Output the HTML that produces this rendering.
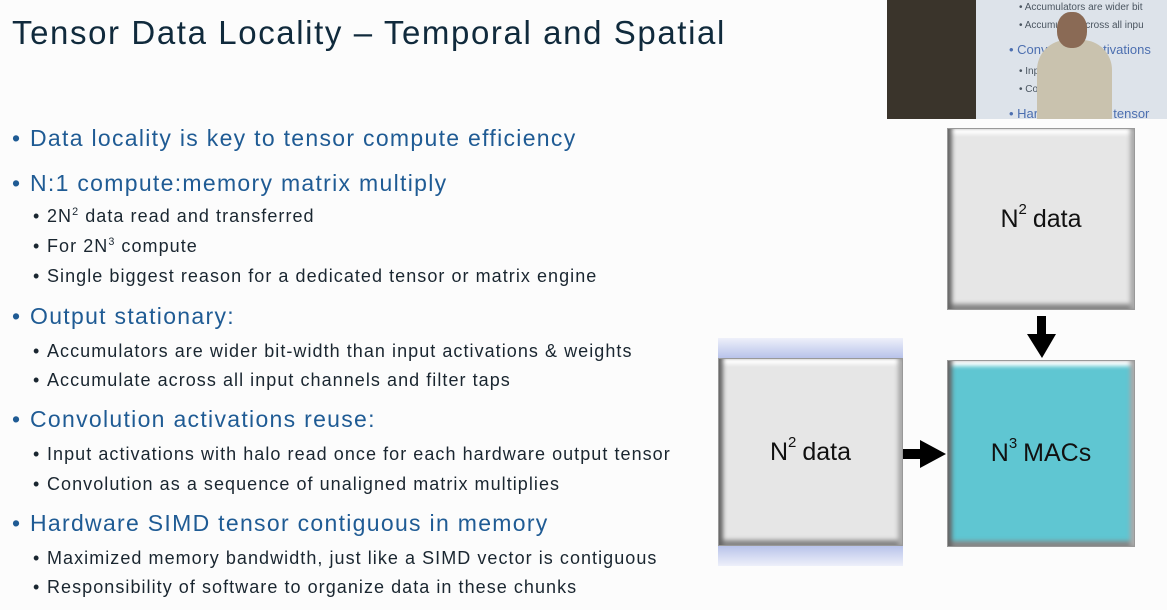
<!DOCTYPE html>
<html><head><style>
body{margin:0;width:1167px;height:610px;background:#fcfcfc;position:relative;overflow:hidden;font-family:"Liberation Sans",sans-serif}
.a{position:absolute;white-space:nowrap}
.t{left:12px;top:14px;font-size:33px;letter-spacing:1.6px;color:#102a3c}
.l1{left:12px;font-size:23px;letter-spacing:1.3px;color:#1f5b94}
.l2{left:33px;font-size:18px;letter-spacing:1.05px;color:#1a2630}
.l1 b,.l2 b{font-weight:normal;display:inline-block;width:18px}
.l2 b{width:14px}
sup{font-size:60%;vertical-align:0;position:relative;top:-7px}
.box{position:absolute;box-sizing:border-box;border:1px solid #999;
box-shadow:inset 6px 0 4px -2px #666, inset -6px 0 4px -2px #aaa, inset 0 8px 4px -3px #fff, inset 0 -8px 4px -3px #888;
display:flex;align-items:center;justify-content:center;font-size:25px;color:#111}
.g{background:#e6e6e6}
.c{background:#5fc6d2}
.box sup{font-size:60%;top:-10px;margin-right:6px}
</style></head><body>
<div class="a t">Tensor Data Locality – Temporal and Spatial</div>
<div class="a l1" style="top:125px"><b>•</b>Data locality is key to tensor compute efficiency</div>
<div class="a l1" style="top:170px"><b>•</b>N:1 compute:memory matrix multiply</div>
<div class="a l2" style="top:206px"><b>•</b>2N<sup>2</sup> data read and transferred</div>
<div class="a l2" style="top:236px"><b>•</b>For 2N<sup>3</sup> compute</div>
<div class="a l2" style="top:266px"><b>•</b>Single biggest reason for a dedicated tensor or matrix engine</div>
<div class="a l1" style="top:303px"><b>•</b>Output stationary:</div>
<div class="a l2" style="top:341px"><b>•</b>Accumulators are wider bit-width than input activations &amp; weights</div>
<div class="a l2" style="top:370px"><b>•</b>Accumulate across all input channels and filter taps</div>
<div class="a l1" style="top:406px"><b>•</b>Convolution activations reuse:</div>
<div class="a l2" style="top:444px"><b>•</b>Input activations with halo read once for each hardware output tensor</div>
<div class="a l2" style="top:474px"><b>•</b>Convolution as a sequence of unaligned matrix multiplies</div>
<div class="a l1" style="top:510px"><b>•</b>Hardware SIMD tensor contiguous in memory</div>
<div class="a l2" style="top:548px"><b>•</b>Maximized memory bandwidth, just like a SIMD vector is contiguous</div>
<div class="a l2" style="top:577px"><b>•</b>Responsibility of software to organize data in these chunks</div>

<div class="a" style="left:887px;top:0;width:280px;height:119px;background:#dde3ea;overflow:hidden">
<div class="a" style="left:0;top:0;width:89px;height:119px;background:#3a342b"></div>
<div class="a" style="left:132px;top:2px;font-size:10px;color:#4a5560">• Accumulators are wider bit</div>
<div class="a" style="left:132px;top:20px;font-size:10px;color:#4a5560">• Accumulate across all inpu</div>
<div class="a" style="left:122px;top:42px;font-size:13px;color:#4c6fb0">• Convolution activations</div>
<div class="a" style="left:132px;top:66px;font-size:10px;color:#4a5560">• Input act with halo</div>
<div class="a" style="left:132px;top:84px;font-size:10px;color:#4a5560">• Convo a sequence</div>
<div class="a" style="left:122px;top:106px;font-size:13px;color:#4c6fb0">• Hardware SIMD tensor</div>
<div class="a" style="left:150px;top:40px;width:75px;height:79px;background:#c9c2ae;border-radius:30px 30px 0 0"></div>
<div class="a" style="left:170px;top:12px;width:30px;height:36px;background:#8a6a55;border-radius:45%"></div>
</div>

<div class="box g" style="left:947px;top:128px;width:188px;height:182px">N<sup>2</sup>data</div>
<div class="a" style="left:718px;top:338px;width:185px;height:228px;background:linear-gradient(#eef0fa,#b8c3ea 20px,transparent 22px,transparent 206px,#b8c3ea 208px,#eef0fa)"></div>
<div class="box g" style="left:718px;top:358px;width:185px;height:188px">N<sup>2</sup>data</div>
<div class="box c" style="left:947px;top:360px;width:188px;height:187px">N<sup>3</sup>MACs</div>
<svg class="a" style="left:0;top:0" width="1167" height="610">
<rect x="1037" y="316" width="9" height="22" fill="#000"/><polygon points="1027,334 1056,334 1042,358" fill="#000"/>
<rect x="903" y="449" width="22" height="10" fill="#000"/><polygon points="920,440 920,468 946,454" fill="#000"/>
</svg>
</body></html>
